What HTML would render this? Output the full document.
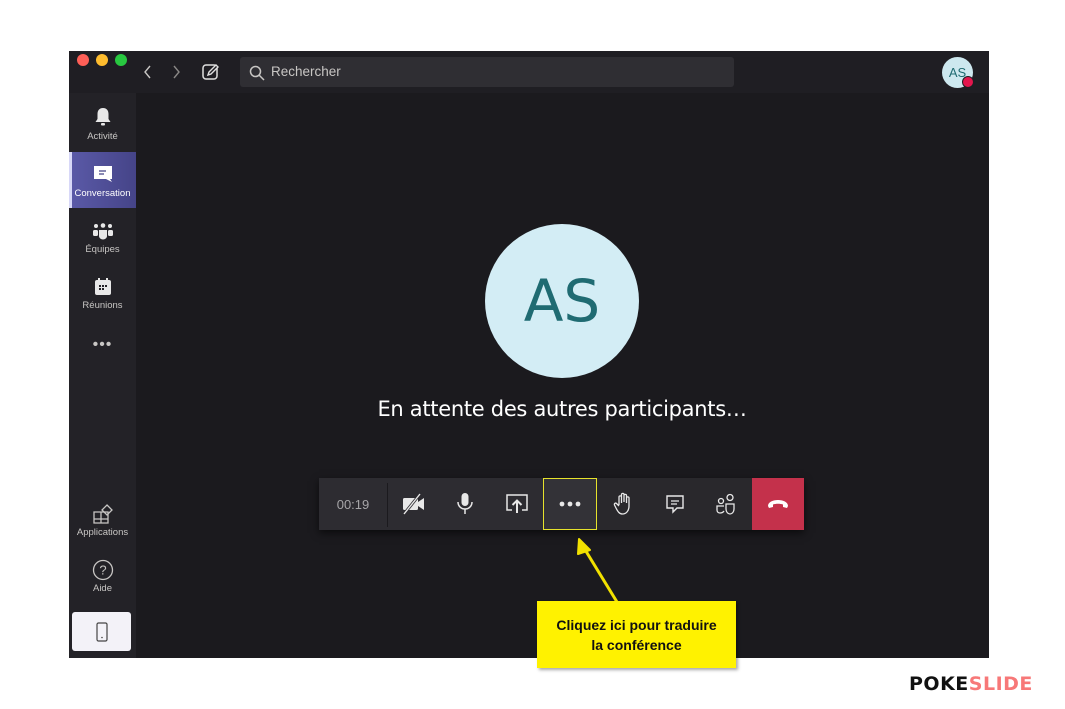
<!DOCTYPE html>
<html><head><meta charset="utf-8"><style>
*{margin:0;padding:0;box-sizing:border-box}
body{width:1065px;height:709px;background:#fff;position:relative;overflow:hidden;font-family:"Liberation Sans",sans-serif}
.win{position:absolute;left:69px;top:51px;width:920px;height:607px;background:#1f1e23}
.top{position:absolute;left:0;top:0;width:920px;height:42px;background:#1f1e23}
.side{position:absolute;left:0;top:42px;width:67px;height:565px;background:#232227}
.main{position:absolute;left:67px;top:42px;width:853px;height:565px;background:#1b1a1e}
.dot{position:absolute;top:3px;width:12px;height:12px;border-radius:50%}
.ab{position:absolute;color:#c8c6c4;font-size:9.5px;text-align:center;width:67px;left:0}
.ic{position:absolute;left:0;width:67px;display:flex;justify-content:center}
.search{position:absolute;left:171px;top:6px;width:494px;height:30px;background:#2f2e33;border-radius:3px;color:#c8c6c4;font-size:13.5px;line-height:30px;padding-left:31px}
.tb{position:absolute;left:319px;top:478px;width:485px;height:52px;background:#29282c;box-shadow:0 3px 8px rgba(0,0,0,.6)}
.btn{position:absolute;top:0;height:52px;display:flex;align-items:center;justify-content:center}
</style></head><body>
<div class="win">
 <div class="top">
  <div class="dot" style="left:8px;background:#fe5f57"></div>
  <div class="dot" style="left:27px;background:#febc2e"></div>
  <div class="dot" style="left:46px;background:#28c840"></div>
  <svg style="position:absolute;left:74px;top:14px" width="10" height="14"><path d="M7 1L2 7L7 13" stroke="#c8c6c4" stroke-width="1.4" fill="none"/></svg>
  <svg style="position:absolute;left:102px;top:14px" width="10" height="14"><path d="M3 1L8 7L3 13" stroke="#8a8886" stroke-width="1.4" fill="none"/></svg>
  <svg style="position:absolute;left:133px;top:12px" width="18" height="18"><rect x="1" y="2" width="14" height="14" rx="3" stroke="#e0e0e0" stroke-width="1.5" fill="none"/><path d="M6 12L7 9L14 2L16 4L9 11Z" stroke="#e0e0e0" stroke-width="1.4" fill="#1f1e23"/></svg>
  <div class="search">Rechercher</div>
  <svg style="position:absolute;left:180px;top:14px" width="16" height="16"><circle cx="6.5" cy="6.5" r="5" stroke="#c8c6c4" stroke-width="1.5" fill="none"/><path d="M10 10L15 15" stroke="#c8c6c4" stroke-width="1.5"/></svg>
  <div style="position:absolute;left:873px;top:6px;width:31px;height:31px;border-radius:50%;background:#cde8ef;color:#1f6b72;font-size:13px;line-height:31px;text-align:center">AS</div>
  <div style="position:absolute;left:893px;top:25px;width:12px;height:12px;border-radius:50%;background:#e3164d;border:1px solid #1f1e23"></div>
 </div>
 <div class="side">
  <div class="ic" style="top:14px"><svg width="18" height="20"><path d="M9 1C5 1 3.5 4 3.5 7V12L1.5 15H16.5L14.5 12V7C14.5 4 13 1 9 1Z" fill="#e8e8e8"/><rect x="7" y="16" width="4" height="2.5" rx="1" fill="#e8e8e8"/></svg></div>
  <div class="ab" style="top:38px">Activité</div>
  <div style="position:absolute;left:0;top:59px;width:67px;height:56px;background:linear-gradient(90deg,#5b5aa8,#454488)"></div>
  <div style="position:absolute;left:0;top:59px;width:3px;height:56px;background:#d8d8f8"></div>
  <div class="ic" style="top:72px"><svg width="20" height="18"><path d="M1 1H19V14H17L19 17L13 14H1Z" fill="#fff"/><path d="M6 6H13M6 9H11" stroke="#454488" stroke-width="1.3"/></svg></div>
  <div class="ab" style="top:95px;color:#fff">Conversation</div>
  <div class="ic" style="top:130px"><svg width="22" height="18"><circle cx="4" cy="3" r="2" fill="#e8e8e8"/><circle cx="11" cy="2.5" r="2.3" fill="#e8e8e8"/><circle cx="18" cy="3" r="2" fill="#e8e8e8"/><rect x="1" y="7" width="5" height="6" rx="1.5" fill="#e8e8e8"/><rect x="16" y="7" width="5" height="6" rx="1.5" fill="#e8e8e8"/><path d="M7 7H15V13C15 15 13 16.5 11 16.5C9 16.5 7 15 7 13Z" fill="#e8e8e8"/></svg></div>
  <div class="ab" style="top:151px">Équipes</div>
  <div class="ic" style="top:185px"><svg width="18" height="18"><rect x="1" y="2" width="16" height="15" rx="2" fill="#e8e8e8"/><rect x="4" y="0" width="2" height="4" fill="#e8e8e8"/><rect x="12" y="0" width="2" height="4" fill="#e8e8e8"/><g fill="#232227"><rect x="5" y="7" width="2" height="2"/><rect x="8" y="7" width="2" height="2"/><rect x="11" y="7" width="2" height="2"/><rect x="5" y="10" width="2" height="2"/><rect x="8" y="10" width="2" height="2"/></g></svg></div>
  <div class="ab" style="top:207px">Réunions</div>
  <div class="ab" style="top:243px;font-size:16px;letter-spacing:1px;color:#c8c6c4">•••</div>
  <div class="ic" style="top:411px"><svg width="20" height="20"><path d="M1 8H8V15H1ZM8 8H15V15H8ZM1 15V19H8V15M8 19H15V15" stroke="#c8c6c4" fill="none" stroke-width="1.3"/><path d="M14 1L19 6L14 11L9 6Z" stroke="#c8c6c4" fill="none" stroke-width="1.3"/></svg></div>
  <div class="ab" style="top:434px">Applications</div>
  <div class="ic" style="top:466px"><svg width="22" height="22"><circle cx="11" cy="11" r="9.5" stroke="#c8c6c4" stroke-width="1.3" fill="none"/><text x="11" y="15.5" text-anchor="middle" fill="#c8c6c4" font-size="13" font-family="Liberation Sans">?</text></svg></div>
  <div class="ab" style="top:490px">Aide</div>
  <div style="position:absolute;left:3px;top:519px;width:59px;height:39px;background:#f3f2f8;border-radius:3px;display:flex;align-items:center;justify-content:center"><svg width="12" height="20"><rect x="1" y="1" width="10" height="18" rx="1.5" stroke="#444" stroke-width="1.2" fill="none"/><circle cx="6" cy="15.5" r=".8" fill="#444"/></svg></div>
 </div>
 <div class="main"></div>
</div>
<div style="position:absolute;left:485px;top:224px;width:154px;height:154px;border-radius:50%;background:#d3edf5;color:#1f6b72;font-size:58px;line-height:154px;text-align:center;font-family:'DejaVu Sans',sans-serif">AS</div>
<div style="position:absolute;left:300px;top:397px;width:524px;text-align:center;color:#fff;font-size:21px;font-family:'DejaVu Sans',sans-serif;letter-spacing:-.3px">En attente des autres participants…</div>
<div class="tb">
 <div style="position:absolute;left:0;top:0;width:224px;height:52px;background:#2d2c31"></div>
 <div style="position:absolute;left:68px;top:5px;width:1px;height:44px;background:#1b1a1e"></div>
 <div class="btn" style="left:0;width:68px;color:#a6a5a8;font-size:13px">00:19</div>
 <div class="btn" style="left:69px;width:51px"><svg width="26" height="22"><rect x="2" y="5" width="15" height="12" rx="1.5" fill="#e8e8e8"/><path d="M17 9L23 5V17L17 13Z" fill="#e8e8e8"/><path d="M3 21L19 1" stroke="#2d2c31" stroke-width="3"/><path d="M3 21L19 1" stroke="#e8e8e8" stroke-width="1.4"/></svg></div>
 <div class="btn" style="left:120px;width:52px"><svg width="18" height="24"><rect x="5.5" y="1" width="7" height="13" rx="3.5" fill="#e8e8e8"/><path d="M2 10C2 14 5 17 9 17C13 17 16 14 16 10M9 17V22" stroke="#e8e8e8" stroke-width="1.5" fill="none"/></svg></div>
 <div class="btn" style="left:172px;width:52px"><svg width="24" height="22"><path d="M7 17H2V2H22V17H17" stroke="#e8e8e8" stroke-width="1.5" fill="none"/><path d="M12 20V8M7.5 12L12 7.5L16.5 12" stroke="#e8e8e8" stroke-width="2" fill="none"/></svg></div>
 <div class="btn" style="left:224px;width:54px;background:#333237;border:1px solid #e6e22c"><svg width="22" height="6"><circle cx="3" cy="3" r="2.4" fill="#e8e8e8"/><circle cx="11" cy="3" r="2.4" fill="#e8e8e8"/><circle cx="19" cy="3" r="2.4" fill="#e8e8e8"/></svg></div>
 <div class="btn" style="left:278px;width:52px"><svg width="20" height="24"><path d="M6 13V5C6 3.5 8.5 3.5 8.5 5V11M8.5 10V2.5C8.5 1 11 1 11 2.5V10M11 10V3.5C11 2 13.5 2 13.5 3.5V11M13.5 11V6C13.5 4.5 16 4.5 16 6V14C16 19 13 22 9.5 22C6.5 22 5 20 3 16L1.5 13C1 11.5 2.5 10.5 3.5 11.5L6 14" stroke="#e8e8e8" stroke-width="1.3" fill="none"/></svg></div>
 <div class="btn" style="left:330px;width:51px"><svg width="20" height="20"><path d="M2 2H18V14H12L8 18V14H2Z" stroke="#e8e8e8" stroke-width="1.4" fill="none"/><path d="M6 7H14M6 10H12" stroke="#e8e8e8" stroke-width="1.3"/></svg></div>
 <div class="btn" style="left:381px;width:52px"><svg width="22" height="22"><circle cx="15" cy="4.5" r="3" stroke="#e8e8e8" stroke-width="1.3" fill="none"/><circle cx="6" cy="8" r="2.5" stroke="#e8e8e8" stroke-width="1.3" fill="none"/><path d="M11 11H19V16C19 19 17 21 15 21C13 21 11 19 11 16Z" stroke="#e8e8e8" stroke-width="1.3" fill="none"/><path d="M9 13H2V17C2 19 3.5 20 5 20C6.5 20 8 19.5 9 18" stroke="#e8e8e8" stroke-width="1.3" fill="none"/></svg></div>
 <div class="btn" style="left:433px;width:52px;background:#c4314b"><svg width="24" height="12"><path d="M2 8C2 4 7 2 12 2C17 2 22 4 22 8L21 10L17 9V6.5C14 5.5 10 5.5 7 6.5V9L3 10Z" fill="#fff"/></svg></div>
</div>
<svg style="position:absolute;left:560px;top:530px" width="70" height="80"><path d="M57 72L24 18" stroke="#f2e100" stroke-width="3"/><path d="M19 9L30 20L18 24Z" fill="#f2e100" stroke="#f2e100" stroke-width="2" stroke-linejoin="round"/></svg>
<div style="position:absolute;left:537px;top:601px;width:199px;height:67px;background:#fff200;box-shadow:2px 2px 3px rgba(0,0,0,.35);text-align:center;font-weight:bold;font-size:14px;line-height:20px;padding-top:14px;color:#111">Cliquez ici pour traduire<br>la conférence</div>
<div style="position:absolute;left:909px;top:673px;font-size:19px;font-weight:bold;letter-spacing:.5px;font-family:'DejaVu Sans',sans-serif"><span style="color:#111">POKE</span><span style="color:#f77878">SLIDE</span></div>
</body></html>
